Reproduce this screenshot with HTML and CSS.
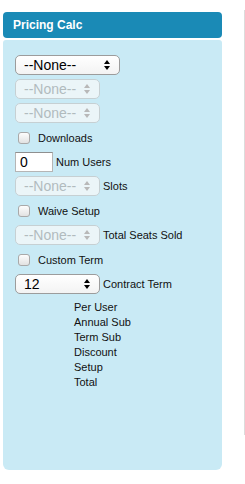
FILE: index.html
```html
<!DOCTYPE html>
<html lang="en">
  <head>
    <meta charset="UTF-8" />
    <meta name="viewport" content="width=device-width, initial-scale=1.0" />
    <title>Pricing Calc</title>
    <link rel="stylesheet" href="styles.css">
  </head>
  <body>
    <!-- Calculator panel -->
    <div class="panel">
      <div class="panel-head">Pricing Calc</div>
      <div class="panel-body">
        <div class="row">
          <span class="sel sel-wide">
            <select><option>--None--</option></select>
            <svg class="arrows" width="6" height="10" viewBox="0 0 6 10"><path d="M0 4 L3 0 L6 4 Z M0 6 L3 10 L6 6 Z" /></svg>
          </span>
        </div>
        <div class="row">
          <span class="sel off">
            <select disabled><option>--None--</option></select>
            <svg class="arrows" width="6" height="10" viewBox="0 0 6 10"><path d="M0 4 L3 0 L6 4 Z M0 6 L3 10 L6 6 Z" /></svg>
          </span>
        </div>
        <div class="row">
          <span class="sel off">
            <select disabled><option>--None--</option></select>
            <svg class="arrows" width="6" height="10" viewBox="0 0 6 10"><path d="M0 4 L3 0 L6 4 Z M0 6 L3 10 L6 6 Z" /></svg>
          </span>
        </div>
        <label class="row check-row"><input type="checkbox" /> Downloads</label>
        <div class="row">
          <input class="num" type="text" value="0" />
          <span class="lbl">Num Users</span>
        </div>
        <div class="row">
          <span class="sel off">
            <select disabled><option>--None--</option></select>
            <svg class="arrows" width="6" height="10" viewBox="0 0 6 10"><path d="M0 4 L3 0 L6 4 Z M0 6 L3 10 L6 6 Z" /></svg>
          </span>
          <span class="lbl">Slots</span>
        </div>
        <label class="row check-row"><input type="checkbox" /> Waive Setup</label>
        <div class="row">
          <span class="sel off">
            <select disabled><option>--None--</option></select>
            <svg class="arrows" width="6" height="10" viewBox="0 0 6 10"><path d="M0 4 L3 0 L6 4 Z M0 6 L3 10 L6 6 Z" /></svg>
          </span>
          <span class="lbl">Total Seats Sold</span>
        </div>
        <label class="row check-row"><input type="checkbox" /> Custom Term</label>
        <div class="row">
          <span class="sel">
            <select><option>12</option><option>24</option><option>36</option></select>
            <svg class="arrows" width="6" height="10" viewBox="0 0 6 10"><path d="M0 4 L3 0 L6 4 Z M0 6 L3 10 L6 6 Z" /></svg>
          </span>
          <span class="lbl">Contract Term</span>
        </div>

        <!-- Results -->
        <ul class="results">
          <li>Per User</li>
          <li>Annual Sub</li>
          <li>Term Sub</li>
          <li>Discount</li>
          <li>Setup</li>
          <li>Total</li>
        </ul>
      </div>
    </div>
    <div class="edge"></div>
  </body>
</html>
```

FILE: styles.css
```css
body {
  margin: 0;
  font-family: "Liberation Sans", Arial, sans-serif;
  background-color: #fff;
  display: flex;
  justify-content: space-between;
}

.panel {
  margin: 12px 0 0 3px;
  width: 219px;
}

.panel-head {
  background-color: #1a8ab6;
  color: #fff;
  font-weight: bold;
  font-size: 12px;
  height: 26px;
  line-height: 27px;
  padding-left: 10px;
  border-radius: 4px;
}

.panel-body {
  margin-top: 2px;
  background-color: #c9eaf5;
  height: 400px;
  padding: 15px 0 15px 12px;
  border-radius: 3px 3px 6px 6px;
  display: flex;
  flex-direction: column;
  gap: 4px;
}

.row {
  display: flex;
  align-items: center;
  height: 20px;
  font-size: 11px;
  color: #111;
}

.check-row {
  height: 21px;
  padding-left: 3px;
}

.check-row input {
  appearance: none;
  -webkit-appearance: none;
  width: 12px;
  height: 12px;
  margin: 0 8px 0 0;
  border: 1px solid #a9a9a9;
  border-radius: 3px;
  background: linear-gradient(#fdfdfd, #e2e2e2);
}

/* selects */
.sel {
  position: relative;
  display: inline-block;
  width: 85px;
  height: 20px;
}

.sel-wide {
  width: 105px;
}

.sel select {
  appearance: none;
  -webkit-appearance: none;
  width: 100%;
  height: 100%;
  margin: 0;
  padding: 0 0 0 8px;
  border: 1px solid #9c9c9c;
  border-radius: 5px;
  background: linear-gradient(#ffffff, #f3f3f3);
  font-family: "Liberation Sans", Arial, sans-serif;
  font-size: 14px;
  color: #000;
}

.sel .arrows {
  position: absolute;
  right: 10px;
  top: 5px;
  fill: #000;
  pointer-events: none;
}

.sel.off select {
  border-color: #c6c6c6;
  background: #fafafa;
  color: #a8a8a8;
}

.sel.off .arrows {
  fill: #b8b8b8;
}

.lbl {
  margin-left: 3px;
}

.num {
  box-sizing: border-box;
  width: 38px;
  height: 20px;
  margin: 0;
  padding: 0 4px;
  border: 1px solid #b5b5b5;
  border-top-color: #8f8f8f;
  font-family: "Liberation Sans", Arial, sans-serif;
  font-size: 14px;
  color: #000;
  background-color: #fff;
}

.results {
  list-style-type: none;
  margin: 2px 0 0 0;
  padding: 0 0 0 59px;
  font-size: 11px;
  line-height: 15px;
  color: #111;
}

.edge {
  width: 1px;
  height: 425px;
  margin-top: 10px;
  background-color: #dcdcdc;
}
```
